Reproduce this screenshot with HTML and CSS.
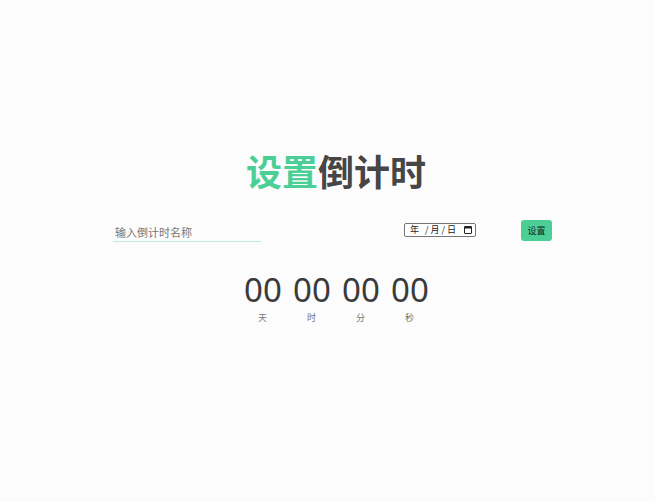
FILE: index.html
```html
<!DOCTYPE html>
<html lang="zh">
<head>
<meta charset="utf-8">
<title>设置倒计时</title>
<link rel="stylesheet" href="styles.css">
</head>
<body>
<div class="page">
  <h1 class="title"><span class="accent">设置</span>倒计时</h1>
  <div class="form-row">
    <input class="name-input" type="text" placeholder="输入倒计时名称">
    <div class="date-box">
      <span class="date-text"><span class="seg">年</span><span class="sep wide">/</span><span class="seg">月</span><span class="sep">/</span><span class="seg">日</span></span>
      <svg class="cal-icon" width="8" height="8" viewBox="0 0 8 8" aria-hidden="true">
        <rect x="0.5" y="0.5" width="7" height="7" rx="0.5" fill="none" stroke="#222" stroke-width="1"/>
        <rect x="0.5" y="0.5" width="7" height="2" fill="#222"/>
      </svg>
    </div>
    <button class="set-btn">设置</button>
  </div>
  <div class="countdown">
    <div class="unit"><div class="num">00</div><div class="label">天</div></div>
    <div class="unit"><div class="num">00</div><div class="label">时</div></div>
    <div class="unit"><div class="num">00</div><div class="label">分</div></div>
    <div class="unit"><div class="num">00</div><div class="label">秒</div></div>
  </div>
</div>
</body>
</html>
```

FILE: styles.css
```css
html, body {
  margin: 0;
  padding: 0;
  background: #fcfcfc;
  font-family: "Noto Sans CJK SC", "Noto Sans", sans-serif;
}
.page {
  width: 446px;
  margin-left: 113px;
  padding-top: 144px;
}
.title {
  margin: 0;
  text-align: center;
  font-size: 36px;
  line-height: 52px;
  font-weight: 700;
  color: #464646;
}
.accent {
  color: #4ccf96;
}
.form-row {
  display: flex;
  align-items: center;
  margin-top: 21px;
  height: 26px;
}
.name-input {
  width: 148px;
  height: 20px;
  box-sizing: border-box;
  border: none;
  border-bottom: 1px solid #c2ebd8;
  background: transparent;
  outline: none;
  padding: 0 2px;
  font-size: 11px;
  font-family: "Noto Sans CJK SC", sans-serif;
  color: #333;
  margin-top: 4px;
}
.name-input::placeholder {
  color: #777;
}
.date-box {
  display: flex;
  align-items: center;
  justify-content: space-between;
  width: 72px;
  height: 14px;
  box-sizing: border-box;
  margin-left: 143px;
  padding: 0 3px 0 5px;
  border: 1px solid #767676;
  border-radius: 2px;
  background: #fff;
}
.date-text {
  display: flex;
  align-items: center;
  font-size: 9px;
  line-height: 12px;
  color: #222;
}
.sep {
  margin: 0 2px;
}
.sep.wide {
  margin-left: 6px;
}
.cal-icon {
  display: block;
}
.set-btn {
  width: 31px;
  height: 21px;
  margin-left: 45px;
  padding: 0;
  border: none;
  border-radius: 3px;
  background: #4ccf96;
  color: #15291f;
  font-size: 9px;
  font-family: "Noto Sans CJK SC", sans-serif;
}
.countdown {
  display: flex;
  justify-content: center;
  gap: 12px;
  margin-top: 29px;
}
.unit {
  width: 37px;
  text-align: center;
}
.num {
  font-family: "Noto Sans", sans-serif;
  font-size: 33px;
  line-height: 36px;
  color: #3a3a3a;
}
.label {
  margin-top: 4px;
  font-size: 9px;
  line-height: 12px;
  color: #777;
}
```
